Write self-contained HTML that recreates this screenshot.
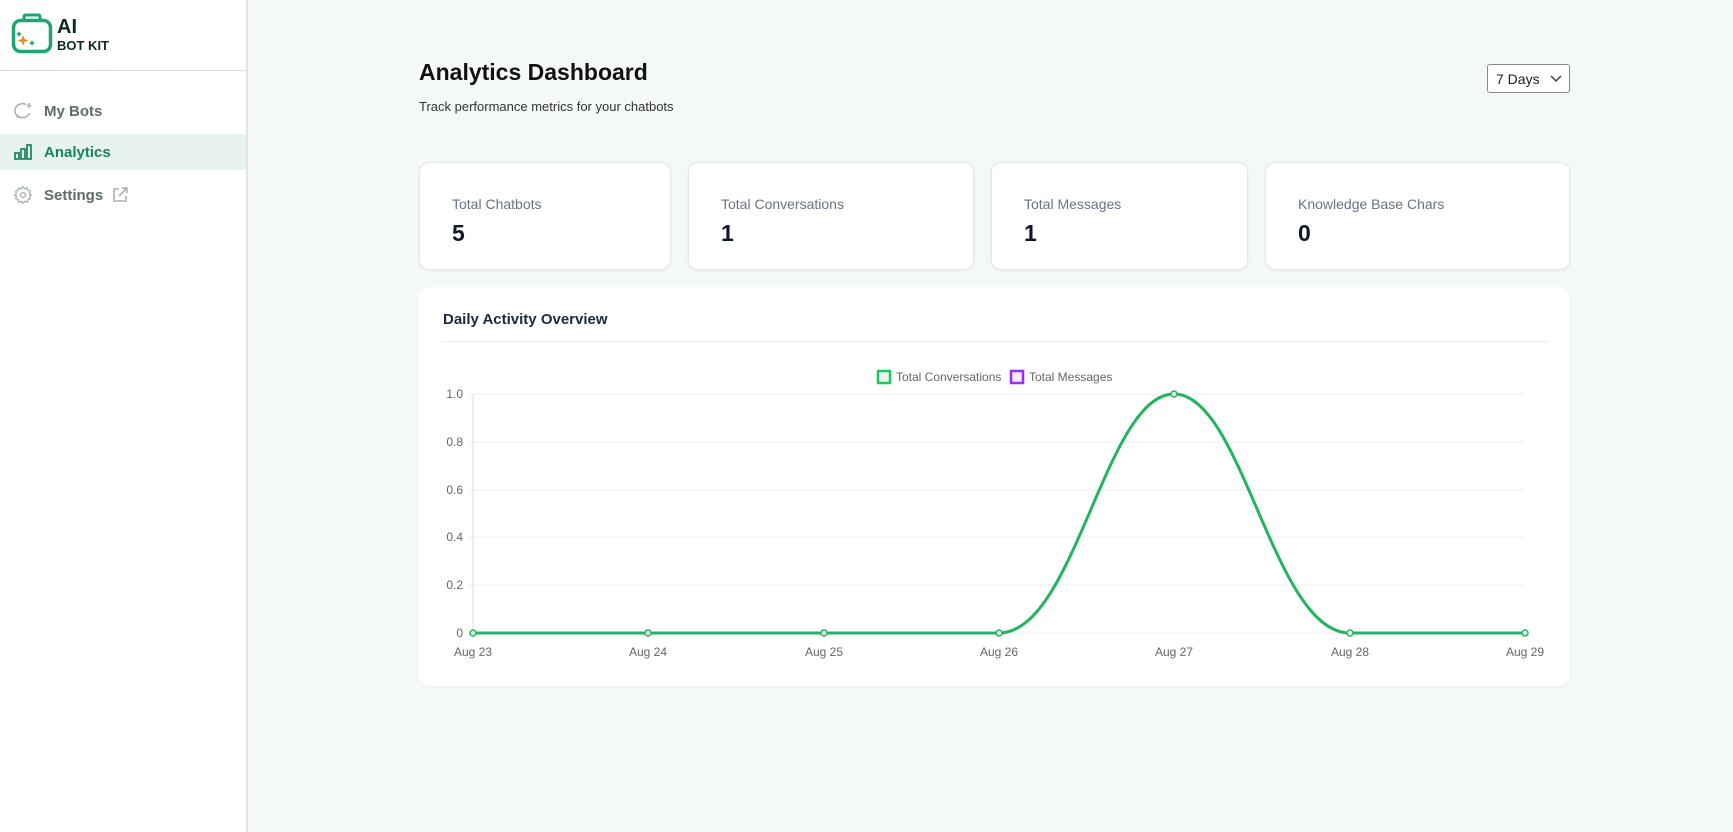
<!DOCTYPE html>
<html><head><meta charset="utf-8"><style>
*{box-sizing:border-box;margin:0;padding:0}
body{width:1733px;height:832px;background:#f4f9f7;font-family:"Liberation Sans",sans-serif;position:relative;overflow:hidden;color:#111827}
.side{position:absolute;left:0;top:0;width:248px;height:832px;background:#fff;border-right:2px solid #e2e5e4}
.logo{height:71px;border-bottom:1px solid #dcdfde;position:relative}
.nav{position:absolute;left:0;width:246px;height:36px;display:flex;align-items:center;font-size:15px;font-weight:bold;color:#5f6b6a}
.nav svg{position:absolute;left:13px}
.nav span{position:absolute;left:44px}
.abs{position:absolute}
.card{position:absolute;top:162px;height:108px;background:#fff;border:1px solid #e3e7e6;border-radius:10px;box-shadow:0 1px 3px rgba(0,0,0,.06)}
.card .l{position:absolute;left:32px;top:33px;font-size:14px;color:#6b7280}
.card .v{position:absolute;left:32px;top:57px;font-size:23px;font-weight:bold;color:#0f172a}
.ax{font-size:12px;fill:#666;font-family:"Liberation Sans",sans-serif}
</style></head><body>
<div class="side">
 <div class="logo">
  <svg class="abs" style="left:11px;top:13px" width="42" height="42" viewBox="0 0 42 42">
   <path d="M13 7 V4 Q13 2 15 2 H27 Q29 2 29 4 V7" fill="none" stroke="#1fa56e" stroke-width="3"/>
   <rect x="2.5" y="7.5" width="37" height="31" rx="7" fill="none" stroke="#1fa56e" stroke-width="3.5"/>
   <path d="M12 22 L13.5 26 L17.5 27.5 L13.5 29 L12 33 L10.5 29 L6.5 27.5 L10.5 26Z" fill="#f08a24"/>
   <path d="M8 18 l1 2 l2 1 l-2 1 l-1 2 l-1-2 l-2-1 l2-1z" fill="#1fa56e"/>
   <path d="M21 27 l1 2 l2 1 l-2 1 l-1 2 l-1-2 l-2-1 l2-1z" fill="#1fa56e"/>
  </svg>
  <div class="abs" style="left:57px;top:17px;font-size:20px;font-weight:900;color:#0d2a1f;line-height:20px">AI</div>
  <div class="abs" style="left:57px;top:39px;font-size:13px;font-weight:900;color:#0d2a1f;line-height:13px">BOT KIT</div>
 </div>
 <div class="nav" style="top:93px">
  <svg width="20" height="20" viewBox="0 0 20 20" fill="none" stroke="#a8b1b0" stroke-width="1.5"><path d="M13 3.5 A7.5 7 0 1 0 16.5 12 M4 16.5 l1-2.5"/><path d="M16 2v5M13.5 4.5h5"/></svg>
  <span>My Bots</span></div>
 <div class="nav" style="top:134px;background:#e6f3ef;color:#19845a">
  <svg width="20" height="20" viewBox="0 0 20 20" fill="none" stroke="#19845a" stroke-width="1.7"><rect x="2" y="11" width="4" height="6"/><rect x="8" y="7" width="4" height="10"/><rect x="14" y="3" width="4" height="14"/></svg>
  <span>Analytics</span></div>
 <div class="nav" style="top:177px">
  <svg width="20" height="20" viewBox="0 0 24 24" fill="none" stroke="#a8b1b0" stroke-width="1.6"><circle cx="12" cy="12" r="3"/><path d="M12 2l2 2.5 3-1 .8 3 3 1-1 3L22 12l-2.2 1.5 1 3-3 1-.8 3-3-1L12 22l-2-2.5-3 1-.8-3-3-1 1-3L2 12l2.2-1.5-1-3 3-1 .8-3 3 1z"/></svg>
  <span>Settings</span>
  <svg style="left:111px" width="18" height="18" viewBox="0 0 18 18" fill="none" stroke="#a8b1b0" stroke-width="1.6"><path d="M8 3H3v12h12v-5M11 2h5v5M16 2l-8 8"/></svg>
 </div>
</div>

<div class="abs" style="left:419px;top:59px;font-size:23px;font-weight:bold;color:#111">Analytics Dashboard</div>
<div class="abs" style="left:419px;top:99px;font-size:13px;color:#333">Track performance metrics for your chatbots</div>
<div class="abs" style="left:1487px;top:64px;width:83px;height:29px;border:1px solid #888;border-radius:3px;background:#fff;font-size:14px;color:#222;padding:6px 0 0 8px">7 Days
 <svg class="abs" style="left:62px;top:9px" width="12" height="10" viewBox="0 0 12 10"><path d="M1 2l5 5 5-5" fill="none" stroke="#555" stroke-width="1.6"/></svg></div>

<div class="card" style="left:419px;width:252px"><div class="l">Total Chatbots</div><div class="v">5</div></div>
<div class="card" style="left:688px;width:286px"><div class="l">Total Conversations</div><div class="v">1</div></div>
<div class="card" style="left:991px;width:257px"><div class="l">Total Messages</div><div class="v">1</div></div>
<div class="card" style="left:1265px;width:305px"><div class="l">Knowledge Base Chars</div><div class="v">0</div></div>

<div class="abs" style="left:418px;top:287px;width:1152px;height:399px;background:#fff;border-radius:12px;box-shadow:0 1px 3px rgba(0,0,0,.05)"></div>
<div class="abs" style="left:443px;top:311px;font-size:15px;font-weight:bold;color:#1f2937">Daily Activity Overview</div>
<div class="abs" style="left:442px;top:341px;width:1106px;height:1px;background:#eceeee"></div>

<svg class="abs" style="left:0;top:0" width="1733" height="832">
 <g stroke="#ececec" stroke-width="1">
  <line x1="468" y1="394" x2="1525" y2="394"/><line x1="468" y1="442" x2="1525" y2="442"/>
  <line x1="468" y1="490" x2="1525" y2="490"/><line x1="468" y1="537" x2="1525" y2="537"/>
  <line x1="468" y1="585" x2="1525" y2="585"/><line x1="468" y1="633" x2="1525" y2="633"/>
 </g>
 <line x1="473" y1="394" x2="473" y2="638" stroke="#ddd"/>
 <g class="ax" text-anchor="end">
  <text x="463" y="398">1.0</text><text x="463" y="446">0.8</text><text x="463" y="494">0.6</text>
  <text x="463" y="541">0.4</text><text x="463" y="589">0.2</text><text x="463" y="637">0</text>
 </g>
 <g class="ax" text-anchor="middle">
  <text x="473" y="656">Aug 23</text><text x="648" y="656">Aug 24</text><text x="824" y="656">Aug 25</text>
  <text x="999" y="656">Aug 26</text><text x="1174" y="656">Aug 27</text><text x="1350" y="656">Aug 28</text><text x="1525" y="656">Aug 29</text>
 </g>
 <rect x="878" y="371" width="12" height="12" fill="#e8f8ee" stroke="#22c55e" stroke-width="2.5"/>
 <text x="896" y="381" class="ax" style="font-size:12px">Total Conversations</text>
 <rect x="1011" y="371" width="12" height="12" fill="#f3ebfd" stroke="#9333ea" stroke-width="2.5"/>
 <text x="1029" y="381" class="ax" style="font-size:12px">Total Messages</text>
 <path d="M473 633 L999 633 C1075 633 1105 394 1174 394 C1243 394 1273 633 1350 633 L1525 633" fill="none" stroke="#22b45f" stroke-width="3"/>
 <g fill="#e8f8ee" stroke="#22b45f" stroke-width="1.5">
  <circle cx="473" cy="633" r="3"/><circle cx="648" cy="633" r="3"/><circle cx="824" cy="633" r="3"/>
  <circle cx="999" cy="633" r="3"/><circle cx="1174" cy="394" r="3"/><circle cx="1350" cy="633" r="3"/><circle cx="1525" cy="633" r="3"/>
 </g>
</svg>
</body></html>
